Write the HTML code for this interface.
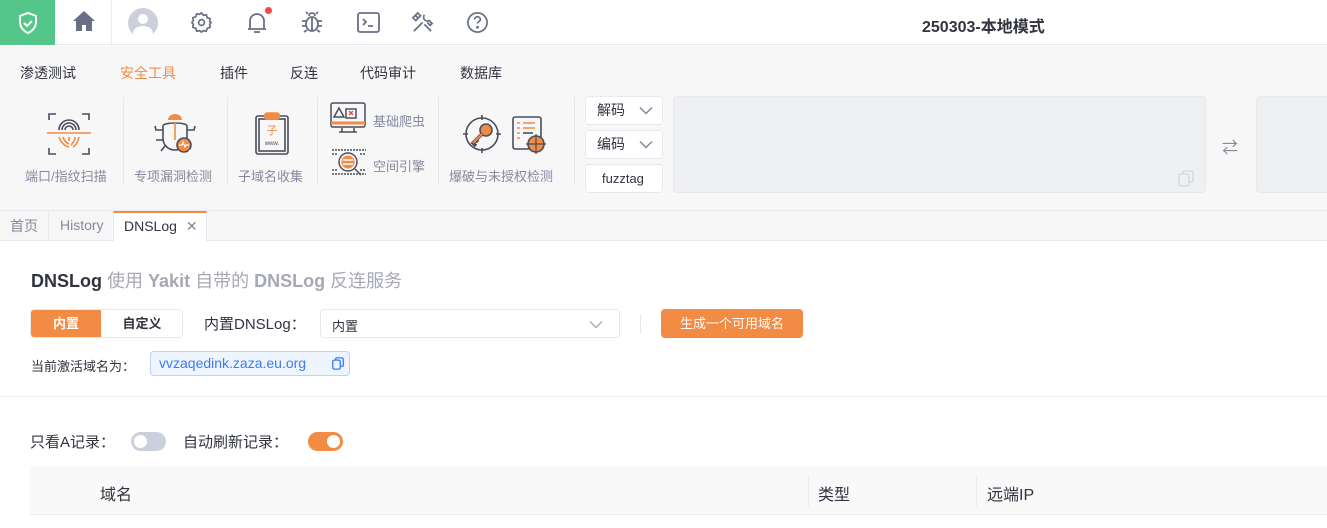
<!DOCTYPE html>
<html><head><meta charset="utf-8"><style>
*{box-sizing:border-box;margin:0;padding:0}
body{width:1327px;height:528px;overflow:hidden;background:#fff;font-family:"Liberation Sans","Noto Sans CJK SC",sans-serif;color:#31343f;position:relative}
.a{position:absolute}
.lbl{position:absolute;font-size:13px;color:#85899e;white-space:nowrap}
.vs{position:absolute;width:1px;background:#e6e7ea;top:97px;height:88px}
.sel{position:absolute;left:585px;width:78px;height:29px;background:#fff;border:1px solid #e8e9ee;border-radius:4px;font-size:14px;padding-left:11px;line-height:27px}
.chev{position:absolute;right:9px;top:9px}
</style></head><body>
<div class="a" style="left:0;top:0;width:1327px;height:45px;background:#fff;border-bottom:1px solid #eaebee"></div>
<div class="a" style="left:0;top:0;width:55px;height:45px;background:#55c68a"></div>
<svg class="a" style="left:16px;top:11px" width="24" height="24" viewBox="0 0 24 24" fill="none" stroke="#fff" stroke-width="2"><path d="M12 2l8 3v6c0 5-3.5 9-8 11-4.5-2-8-6-8-11V5z"/><path d="M8 12l3 3 5-5"/></svg>
<div class="a" style="left:111px;top:0;width:1px;height:45px;background:#eaebee"></div>
<svg class="a" style="left:72px;top:10px" width="24" height="22" viewBox="0 0 24 22"><path d="M12 1L1 11h3v10h6v-6h4v6h6V11h3z" fill="#6b6f85"/></svg>
<div class="a" style="left:128px;top:8px;width:30px;height:30px;border-radius:50%;background:#ccd0dc;overflow:hidden"><div class="a" style="left:10px;top:6px;width:10px;height:10px;border-radius:50%;background:#fff"></div><div class="a" style="left:5px;top:18px;width:20px;height:14px;border-radius:50%;background:#fff"></div></div>
<svg class="a" style="left:190px;top:11px" width="23" height="23" viewBox="0 0 24 24" fill="none" stroke="#6b6f85" stroke-width="1.8"><circle cx="12" cy="12" r="3"/><path d="M12 2l2 2.5 3-.5 1 3 3 1-.5 3L22 12l-1.5 2 .5 3-3 1-1 3-3-.5L12 22l-2-1.5-3 .5-1-3-3-1 .5-3L2 12l1.5-2-.5-3 3-1 1-3 3 .5z"/></svg>
<svg class="a" style="left:246px;top:11px" width="22" height="24" viewBox="0 0 22 24" fill="none" stroke="#6b6f85" stroke-width="1.8"><path d="M4 18V10a7 7 0 0114 0v8H2h18"/><path d="M8 21h6"/></svg>
<div class="a" style="left:265px;top:7px;width:7px;height:7px;border-radius:50%;background:#f0494c"></div>
<svg class="a" style="left:300px;top:10px" width="24" height="24" viewBox="0 0 24 24" fill="none" stroke="#6b6f85" stroke-width="1.8"><ellipse cx="12" cy="14" rx="6" ry="7"/><path d="M9 6a3 3 0 016 0M12 8v13M6 11H2M18 11h4M6 16H2M18 16h4M7 20l-3 2M17 20l3 2M8 4L6 2M16 4l2-2"/></svg>
<svg class="a" style="left:357px;top:12px" width="23" height="21" viewBox="0 0 23 21" fill="none" stroke="#6b6f85" stroke-width="1.8"><rect x="1" y="1" width="21" height="19" rx="2"/><path d="M6 7l3 3-3 3M11 14h5"/></svg>
<svg class="a" style="left:411px;top:11px" width="23" height="23" viewBox="0 0 24 24" fill="none" stroke="#6b6f85" stroke-width="1.8"><path d="M3 21l9-9M14 4a4 4 0 005 6l3 3-2 2-3-3M4 4l4 4M2 7l5-5 3 3-5 5zM14 14l7 7"/></svg>
<svg class="a" style="left:466px;top:11px" width="23" height="23" viewBox="0 0 24 24" fill="none" stroke="#6b6f85" stroke-width="1.8"><circle cx="12" cy="12" r="10"/><path d="M9 9a3 3 0 116 0c0 2-3 2-3 4"/><circle cx="12" cy="17" r=".6" fill="#6b6f85"/></svg>
<div class="a" style="left:922px;top:13px;font-size:16px;font-weight:bold;color:#31343f">250303-本地模式</div>
<div class="a" style="left:0;top:46px;width:1327px;height:165px;background:#f7f7f8;border-bottom:1px solid #e8e9ee"></div>
<div class="a" style="top:63px;font-size:14px;left:20px">渗透测试</div>
<div class="a" style="top:63px;font-size:14px;left:120px;color:#f28b44">安全工具</div>
<div class="a" style="top:63px;font-size:14px;left:220px">插件</div>
<div class="a" style="top:63px;font-size:14px;left:290px">反连</div>
<div class="a" style="top:63px;font-size:14px;left:360px">代码审计</div>
<div class="a" style="top:63px;font-size:14px;left:460px">数据库</div>
<div class="vs" style="left:123px"></div><div class="vs" style="left:227px"></div><div class="vs" style="left:317px"></div><div class="vs" style="left:438px"></div><div class="vs" style="left:574px"></div>
<svg class="a" style="left:47px;top:112px" width="44" height="44" viewBox="0 0 44 44" fill="none" stroke="#4a4d5c" stroke-width="1.6"><path d="M2 8V2h7M35 2h7v6M2 36v6h7M35 42h7v-6"/><path d="M12 18a10 10 0 0120 0M15 18a7 7 0 0114 0M18 18a4 4 0 018 0"/><path d="M0 21h44" stroke="#f28b44"/><path d="M12 25c2 6 6 9 10 10M16 25c1 4 4 6 6 7M22 25v4M28 25c0 4-2 6-4 8M32 25c-1 5-3 8-6 10" stroke="#f28b44"/></svg>
<div class="lbl" style="left:25px;top:166px">端口/指纹扫描</div>
<svg class="a" style="left:153px;top:112px" width="44" height="44" viewBox="0 0 44 44" fill="none" stroke="#4a4d5c" stroke-width="1.6"><path d="M15 8a7 6 0 0114 0z" fill="#f28b44" stroke="none"/><path d="M10 14c0-4 24-4 24 0v12c0 8-6 12-12 12s-12-4-12-12z"/><path d="M22 10v18" stroke="#f28b44"/><path d="M10 18H3l-1-4M34 18h7l1-4M10 28H3M12 34l-4 5"/><circle cx="31" cy="33" r="7" fill="#f28b44" stroke="#4a4d5c"/><path d="M36 38l4 4M26 33h3l1-3 2 5 1-2h3" stroke="#fff" stroke-width="1.2"/></svg>
<div class="lbl" style="left:134px;top:166px">专项漏洞检测</div>
<svg class="a" style="left:254px;top:110px" width="36" height="46" viewBox="0 0 36 46" fill="none" stroke="#4a4d5c" stroke-width="1.6"><rect x="2" y="6" width="32" height="38" rx="2"/><rect x="5" y="9" width="26" height="32"/><rect x="11" y="3" width="14" height="6" rx="2" fill="#f28b44" stroke="#f28b44"/><text x="18" y="24" font-size="11" fill="#f28b44" stroke="none" text-anchor="middle" font-family="Noto Sans CJK SC">子</text><text x="18" y="35" font-size="6" fill="#4a4d5c" stroke="none" text-anchor="middle">www.</text></svg>
<div class="lbl" style="left:238px;top:166px">子域名收集</div>
<svg class="a" style="left:330px;top:101px" width="36" height="34" viewBox="0 0 36 34" fill="none" stroke="#4a4d5c" stroke-width="1.5"><rect x="1" y="2" width="34" height="24" rx="2"/><path d="M1 22h34" stroke="#f28b44" stroke-width="3"/><path d="M12 27v4h12v-4M9 31h18"/><path d="M4 16l5-9 5 9z"/><rect x="16" y="8" width="10" height="9" fill="#fff"/><path d="M19 10l4 4M23 10l-4 4" stroke="#f0494c"/></svg>
<div class="lbl" style="left:373px;top:111px">基础爬虫</div>
<svg class="a" style="left:331px;top:148px" width="36" height="34" viewBox="0 0 36 34" fill="none" stroke="#4a4d5c" stroke-width="1.4"><path d="M1 2h34M1 6h6M29 6h6M1 22h6M29 22h6M1 26h34" stroke-dasharray="2 1"/><circle cx="17" cy="14" r="9"/><circle cx="17" cy="14" r="6.5" fill="#f28b44" stroke="none"/><path d="M12 12h10M12 16h10" stroke="#fff"/><path d="M24 21l6 6"/></svg>
<div class="lbl" style="left:373px;top:156px">空间引擎</div>
<svg class="a" style="left:462px;top:114px" width="40" height="40" viewBox="0 0 40 40" fill="none" stroke="#4a4d5c" stroke-width="1.6"><circle cx="20" cy="20" r="16"/><path d="M20 1v5M20 34v5M1 20h5M34 20h5"/><circle cx="24" cy="16" r="6" fill="#f28b44"/><path d="M20 20l-9 9 3 3M14 26l2 2" stroke="#4a4d5c" stroke-width="3.5"/><path d="M20 20l-9 9" stroke="#f28b44" stroke-width="2"/></svg>
<svg class="a" style="left:512px;top:116px" width="34" height="38" viewBox="0 0 34 38" fill="none" stroke="#4a4d5c" stroke-width="1.6"><rect x="1" y="1" width="28" height="32" rx="2"/><path d="M5 7h3M11 7h12M5 12h3M11 12h12M5 17h3M5 22h3" stroke="#f28b44"/><path d="M11 17h10"/><circle cx="24" cy="28" r="8" fill="#f28b44"/><path d="M24 18v20M14 28h20" stroke-width="1.2"/></svg>
<div class="lbl" style="left:449px;top:166px">爆破与未授权检测</div>
<div class="sel" style="top:96px">解码 <svg class="chev" width="14" height="9" viewBox="0 0 14 9" fill="none" stroke="#85899e" stroke-width="1.5"><path d="M1 1.5l6 6 6-6"/></svg></div>
<div class="sel" style="top:130px">编码 <svg class="chev" width="14" height="9" viewBox="0 0 14 9" fill="none" stroke="#85899e" stroke-width="1.5"><path d="M1 1.5l6 6 6-6"/></svg></div>
<div class="sel" style="top:164px;font-size:13px;padding-left:16px">fuzztag</div>
<div class="a" style="left:673px;top:96px;width:533px;height:97px;background:#eff0f2;border:1px solid #e8e9ee;border-radius:4px"></div>
<svg class="a" style="left:1178px;top:170px" width="16" height="17" viewBox="0 0 16 17" fill="none" stroke="#d3d5dd" stroke-width="1.3"><rect x="1" y="4" width="10" height="12" rx="2"/><path d="M5 4V2a1 1 0 011-1h7a2 2 0 012 2v8a1 1 0 01-1 1h-3"/></svg>
<div class="a" style="left:1222px;top:134px;font-size:16px;color:#85899e">&#8644;</div>
<div class="a" style="left:1256px;top:96px;width:80px;height:97px;background:#eff0f2;border:1px solid #e8e9ee;border-radius:4px"></div>
<div class="a" style="left:0;top:211px;width:1327px;height:30px;background:#f6f6f7;border-bottom:1px solid #e8e9ee"></div>
<div class="a" style="left:0;top:211px;width:49px;height:29px;border-right:1px solid #e8e9ee;font-size:14px;color:#85899e;padding:5px 0 0 10px">首页</div>
<div class="a" style="left:49px;top:211px;width:64px;height:29px;font-size:14px;color:#85899e;padding:6px 0 0 11px">History</div>
<div class="a" style="left:113px;top:211px;width:94px;height:30px;background:#fff;border-top:2px solid #f28b44;border-right:1px solid #e8e9ee;border-left:1px solid #e8e9ee;font-size:14px;color:#31343f;padding:5px 0 0 10px">DNSLog <span style="color:#85899e;margin-left:5px">✕</span></div>
<div class="a" style="left:31px;top:267px;font-size:18px;white-space:nowrap"><b style="font-weight:bold;color:#31343f">DNSLog</b> <span style="color:#a6a8b3;font-size:18px">使用 <b>Yakit</b> 自带的 <b>DNSLog</b> 反连服务</span></div>
<div class="a" style="left:30px;top:309px;width:153px;height:29px;border:1px solid #e8e9ee;border-radius:4px;overflow:hidden;font-size:13px;font-weight:bold">
<div class="a" style="left:0;top:0;width:70px;height:29px;background:#f28b44;color:#fff;text-align:center;line-height:28px">内置</div>
<div class="a" style="left:70px;top:0;width:82px;height:29px;text-align:center;line-height:28px">自定义</div></div>
<div class="a" style="left:204px;top:313px;font-size:15px">内置DNSLog：</div>
<div class="a" style="left:320px;top:309px;width:300px;height:29px;border:1px solid #e8e9ee;border-radius:4px;font-size:13px;padding:6px 0 0 11px">内置<svg style="position:absolute;right:16px;top:10px" width="14" height="9" viewBox="0 0 14 9" fill="none" stroke="#a6a8b3" stroke-width="1.3"><path d="M1 1.5l6 6 6-6"/></svg></div>
<div class="a" style="left:640px;top:314px;width:1px;height:20px;background:#e8e9ee"></div>
<div class="a" style="left:661px;top:309px;width:142px;height:29px;background:#f28b44;border-radius:4px;color:#fff;font-size:13px;text-align:center;line-height:29px">生成一个可用域名</div>
<div class="a" style="left:31px;top:356px;font-size:13px">当前激活域名为：</div>
<div class="a" style="left:150px;top:351px;width:200px;height:25px;background:#eef5ff;border:1px solid #b8d4fb;border-radius:4px;font-size:14px;color:#3b7cf0;padding:3px 0 0 8px">vvzaqedink.zaza.eu.org</div>
<svg class="a" style="left:332px;top:357px" width="12" height="13" viewBox="0 0 16 17" fill="none" stroke="#3b7cf0" stroke-width="1.8"><rect x="1" y="4" width="10" height="12" rx="2"/><path d="M5 4V2a1 1 0 011-1h7a2 2 0 012 2v8a1 1 0 01-1 1h-3"/></svg>
<div class="a" style="left:0;top:396px;width:1327px;height:1px;background:#eaebee"></div>
<div class="a" style="left:30px;top:431px;font-size:15px">只看A记录：</div>
<div class="a" style="left:131px;top:432px;width:35px;height:19px;border-radius:10px;background:#ccd0dc"><div class="a" style="left:3px;top:3px;width:13px;height:13px;border-radius:50%;background:#fff"></div></div>
<div class="a" style="left:183px;top:431px;font-size:15px">自动刷新记录：</div>
<div class="a" style="left:308px;top:432px;width:35px;height:19px;border-radius:10px;background:#f28b44"><div class="a" style="left:19px;top:3px;width:13px;height:13px;border-radius:50%;background:#fff"></div></div>
<div class="a" style="left:30px;top:466px;width:1297px;height:49px;background:#f9f9f9;border-bottom:1px solid #eaebee"></div>
<div class="a" style="left:100px;top:481px;font-size:16px">域名</div>
<div class="a" style="left:808px;top:476px;width:1px;height:30px;background:#eaebee"></div>
<div class="a" style="left:818px;top:481px;font-size:16px">类型</div>
<div class="a" style="left:976px;top:476px;width:1px;height:30px;background:#eaebee"></div>
<div class="a" style="left:987px;top:481px;font-size:16px">远端IP</div>
</body></html>
